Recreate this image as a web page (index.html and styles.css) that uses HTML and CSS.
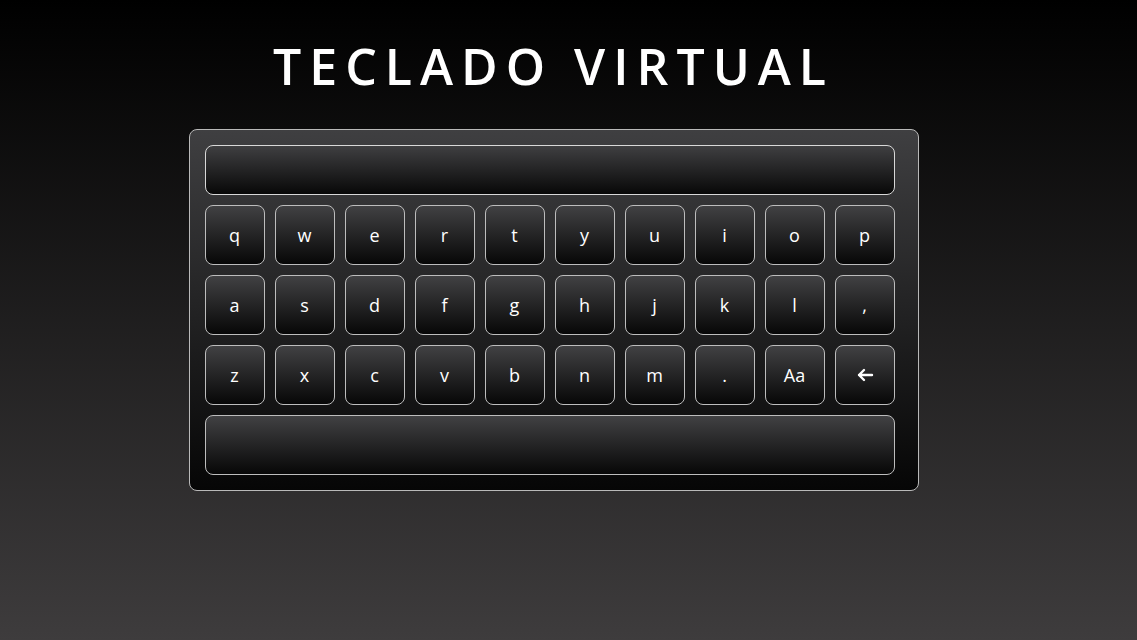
FILE: index.html
```html
<!DOCTYPE html>
<html lang="es">
<head>
<meta charset="utf-8">
<title>Teclado Virtual</title>
<link rel="stylesheet" href="styles.css">
</head>
<body>
<main class="page">
<h1 class="title">TECLADO VIRTUAL</h1>
<div class="keyboard">
  <div class="display"></div>
  <div class="row">
    <div class="key">q</div><div class="key">w</div><div class="key">e</div><div class="key">r</div><div class="key">t</div><div class="key">y</div><div class="key">u</div><div class="key">i</div><div class="key">o</div><div class="key">p</div>
  </div>
  <div class="row">
    <div class="key">a</div><div class="key">s</div><div class="key">d</div><div class="key">f</div><div class="key">g</div><div class="key">h</div><div class="key">j</div><div class="key">k</div><div class="key">l</div><div class="key">,</div>
  </div>
  <div class="row">
    <div class="key">z</div><div class="key">x</div><div class="key">c</div><div class="key">v</div><div class="key">b</div><div class="key">n</div><div class="key">m</div><div class="key">.</div><div class="key">Aa</div>
    <div class="key"><svg class="icon" width="18" height="14" viewBox="0 0 18 14"><path d="M16 7H3M8 2L3 7l5 5" fill="none" stroke="#fff" stroke-width="2.4" stroke-linecap="round" stroke-linejoin="round"/></svg></div>
  </div>
  <div class="key space"></div>
</div>
</main>
</body>
</html>
```
FILE: styles.css
```css
html, body {
  margin: 0;
  height: 100%;
}
body {
  background: linear-gradient(to bottom, #000000 0%, #3e3c3d 100%);
  font-family: "Open Sans", "Noto Sans", sans-serif;
  color: #fff;
}
.page {
  display: flex;
  flex-direction: column;
  align-items: center;
  padding-right: 30px;
}
.title {
  margin: 38px 0 0 0;
  font-size: 50px;
  font-weight: 600;
  letter-spacing: 8px;
  line-height: 56px;
  height: 56px;
  padding-left: 0;
}
.keyboard {
  margin-top: 35px;
  width: 690px;
  padding: 15px 23px 15px 15px;
  border: 1px solid #b9b9b9;
  border-radius: 8px;
  background: linear-gradient(to bottom, #3f3f41 0%, #060606 100%);
  display: flex;
  flex-direction: column;
  gap: 10px;
}
.display {
  height: 48px;
  border: 1px solid #d8d8d8;
  border-radius: 8px;
  background: linear-gradient(to bottom, #3f3f41 0%, #080808 100%);
}
.row {
  display: grid;
  grid-template-columns: repeat(10, 60px);
  gap: 10px;
}
.key {
  height: 58px;
  border: 1px solid #bdbdbd;
  border-radius: 8px;
  background: linear-gradient(to bottom, #414143 0%, #070707 100%);
  display: flex;
  align-items: center;
  justify-content: center;
  font-size: 18px;
  color: #fff;
}
.space {
  height: 58px;
}
.icon {
  display: block;
}
```
